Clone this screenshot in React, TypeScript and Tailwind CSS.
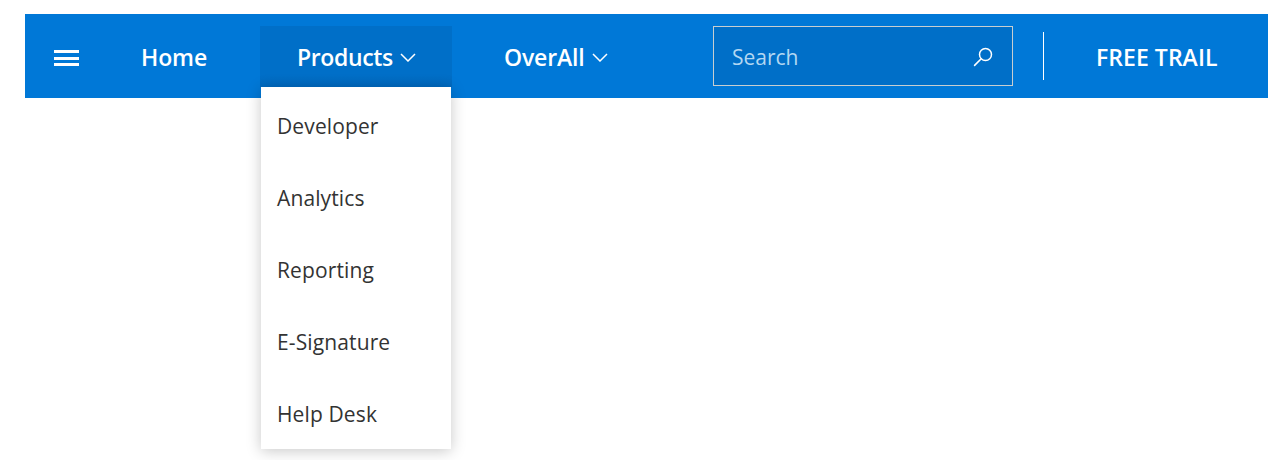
const products = ["Developer", "Analytics", "Reporting", "E-Signature", "Help Desk"]
const font = "font-['Open_Sans','Noto_Sans',sans-serif]"

function Chevron() {
  return (
    <svg width="16" height="9" viewBox="0 0 16 9" fill="none" stroke="currentColor" strokeWidth="1.5" className="shrink-0">
      <path d="M1 1l7 7 7-7" />
    </svg>
  )
}

function SearchIcon() {
  return (
    <svg width="20" height="20" viewBox="0 0 20 20" fill="none" stroke="currentColor" strokeWidth="1.5">
      <circle cx="12.5" cy="7.5" r="6" />
      <path d="M8.2 11.8 1.6 18.4" strokeLinecap="round" strokeWidth="1.6" />
    </svg>
  )
}

export default function App() {
  return (
    <div className={`h-[460px] w-[1278px] overflow-hidden bg-white pt-[14px] pl-[25px] pr-[10px] ${font}`}>
      <nav className="flex h-[84px] items-start bg-[#0078d7] text-white">
        {/* Hamburger */}
        <div className="mt-[36px] ml-[29px] flex h-[16px] w-[25px] flex-col justify-between">
          <span className="h-[3px] bg-white" />
          <span className="h-[3px] bg-white" />
          <span className="h-[3px] bg-white" />
        </div>

        <a className="mt-[12px] ml-[62px] flex h-[61px] w-[67px] items-center pt-[2px] text-[23px] font-semibold tracking-[-0.1px]">Home</a>

        {/* Products with open menu */}
        <div className="relative mt-[12px] ml-[52px] w-[192px]">
          <a className="flex h-[61px] items-center gap-[7px] bg-gradient-to-b from-[#006fc8] from-80% to-[#0069bf] pt-[2px] pl-[37px] text-[23px] font-semibold tracking-[-0.35px]">
            Products
            <Chevron />
          </a>
          <div className="absolute top-[61px] left-[1px] h-[362px] w-[190px] bg-white pt-[4px] text-[#333] shadow-[0_2px_14px_rgba(0,0,0,0.22)]">
            {products.map((item) => (
              <div key={item} className="flex h-[72px] items-center pl-[16px] text-[21px] tracking-[0.12px]">
                {item}
              </div>
            ))}
          </div>
        </div>

        <a className="mt-[12px] ml-[52px] flex h-[61px] w-[104px] items-center gap-[7px] pt-[2px] text-[23px] font-semibold tracking-[-0.15px]">
          OverAll
          <Chevron />
        </a>

        {/* Search */}
        <div className="mt-[12px] ml-[105px] flex h-[60px] w-[300px] items-center justify-between border border-[#c8ced0] bg-[#006fc8] pt-[1px] pr-[19px] pl-[18px]">
          <span className="pt-[3px] text-[21px] text-[#b3d7f2]">Search</span>
          <SearchIcon />
        </div>

        <div className="mt-[18px] ml-[30px] h-[48px] w-px bg-white" />

        <a className="mt-[12px] ml-[52px] flex h-[61px] items-center pt-[2px] text-[23px] font-semibold tracking-[0.05px]">FREE TRAIL</a>
      </nav>
    </div>
  )
}
